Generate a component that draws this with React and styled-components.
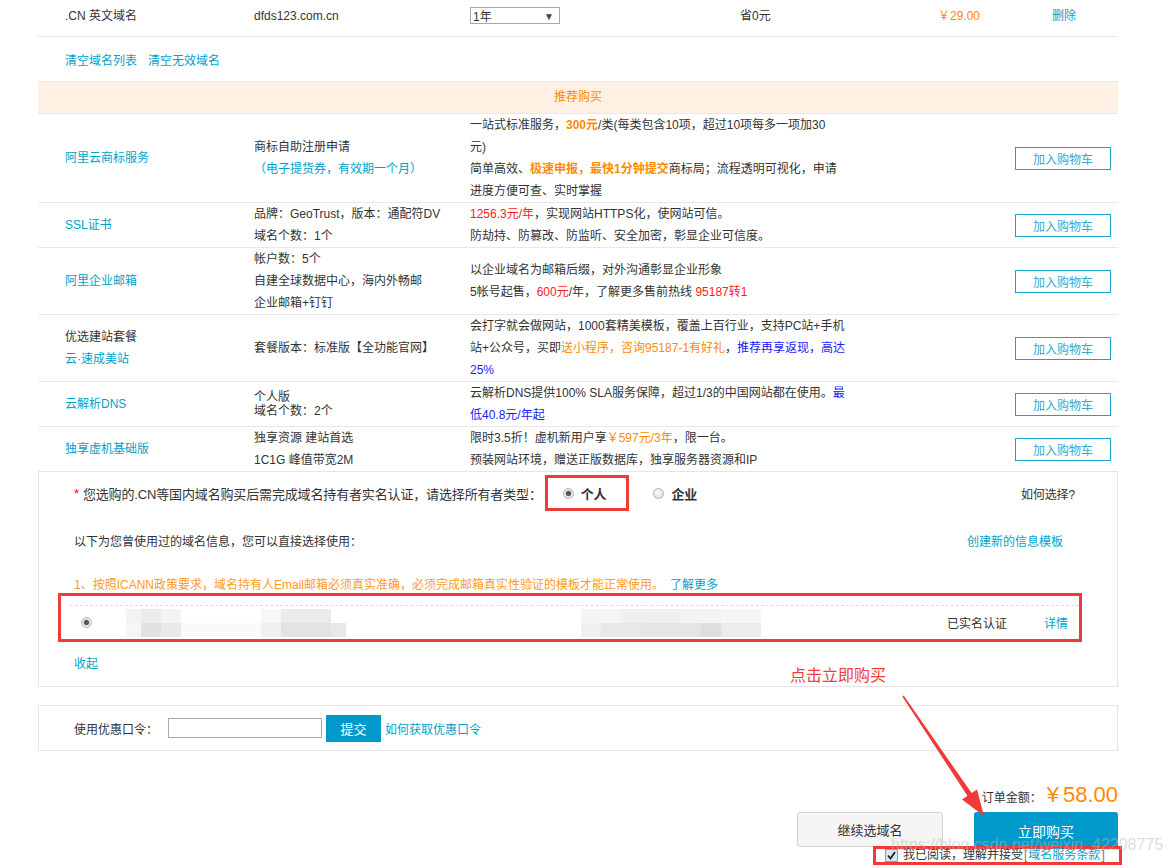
import React from 'react';
import styled, { createGlobalStyle, css } from 'styled-components';

const BLUE = '#00a2ca';
const ORANGE = '#ff8a00';
const MARK = '#ef3a3a';

const GlobalStyle = createGlobalStyle`
  body {
    margin: 0;
    background: #fff;
    font-family: "Liberation Sans", "Noto Sans CJK SC", sans-serif;
    font-size: 12px;
    color: #333;
  }
`;

const Page = styled.div`
  position: relative;
  width: 1080px;
  margin-left: 38px;
  min-height: 868px;
`;

// cart line at the top
const CartRow = styled.div`
  display: grid;
  grid-template-columns: 189px 216px 270px 198px 114px auto;
  height: 37px;
  box-sizing: border-box;
  padding: 5px 0 0 27px;
  line-height: 22px;
  border-bottom: 1px solid #e8e8e8;
`;

const Select = styled.div`
  display: flex;
  align-items: center;
  justify-content: space-between;
  box-sizing: border-box;
  width: 90px;
  height: 17px;
  margin-top: 2px;
  padding: 2px 5px 0 2px;
  border: 1px solid #a9a9a9;
  line-height: 14px;
  span { font-size: 10px; color: #444; }
`;

const Price = styled.div`
  color: ${ORANGE};
`;

const Link = styled.a`
  color: ${BLUE};
  text-decoration: none;
  cursor: pointer;
`;

const LinkBar = styled.div`
  display: flex;
  align-items: center;
  gap: 11px;
  height: 45px;
  box-sizing: border-box;
  padding-left: 27px;
  border-bottom: 1px solid #e8e8e8;
`;

const RecommendHead = styled.div`
  height: 32px;
  box-sizing: border-box;
  line-height: 31px;
  text-align: center;
  color: ${ORANGE};
  background: #fef1e3;
  border-bottom: 1px solid #e8e8e8;
`;

// recommended products
const ProductRow = styled.div`
  display: grid;
  grid-template-columns: 189px 216px 1fr 96px;
  align-items: center;
  padding: 0 7px 0 27px;
  border-bottom: ${p => (p.$last ? 'none' : '1px solid #e8e8e8')};
`;

const Cell = styled.div`
  white-space: nowrap;
  line-height: ${p => (p.$tight ? '14px' : '22px')};
`;

const Name = styled.div`
  color: ${p => (p.$plain ? '#333' : BLUE)};
`;

const Hi = styled.span`
  color: ${p => ({ orange: ORANGE, red: '#ff1a1a', blue: '#1a1aff', link: BLUE }[p.$tone])};
  font-weight: ${p => (p.$bold ? 'bold' : 'normal')};
`;

const CartButton = styled.button`
  width: 96px;
  height: 23px;
  box-sizing: border-box;
  padding: 0;
  border: 1px solid #19a3cf;
  background: #fff;
  color: #3aa6cc;
  font: inherit;
  cursor: pointer;
`;

// real-name owner box
const OwnerBox = styled.div`
  border: 1px solid #e5e5e5;
  padding: 0 0 12px 35px;
`;

const OwnerRow = styled.div`
  display: flex;
  align-items: center;
  height: 42px;
  font-size: 13px;
  letter-spacing: -0.15px;
`;

const Required = styled.span`
  color: #f00;
  margin-right: 4px;
`;

const Option = styled.label`
  display: inline-flex;
  align-items: center;
  gap: 7px;
  font-weight: bold;
  font-size: 13px;
  ${p =>
    p.$marked
      ? css`
          height: 36px;
          box-sizing: border-box;
          margin-left: 3px;
          padding: 0 20px 0 15px;
          border: 3px solid ${MARK};
        `
      : css`
          margin-left: 24px;
        `}
`;

const Radio = styled.span`
  display: inline-block;
  flex: none;
  width: 11px;
  height: 11px;
  box-sizing: border-box;
  border-radius: 50%;
  border: 1px solid #b3b3b3;
  background: ${p =>
    p.$checked
      ? 'radial-gradient(circle, #555 0 2px, #8a8a8a 2.6px, #e9e9e9 3.2px)'
      : 'radial-gradient(circle at 40% 35%, #fbfbfb, #d9d9d9)'};
`;

const HowTo = styled.span`
  margin-left: auto;
  margin-right: 42px;
  font-size: 12px;
`;

const InfoRow = styled.div`
  display: flex;
  align-items: center;
  justify-content: space-between;
  height: 52px;
  padding-right: 54px;
`;

const Notice = styled.div`
  margin-top: 9px;
  line-height: 20px;
  color: #ff9a1f;
  a { margin-left: 6px; }
`;

const RecordFrame = styled.div`
  width: 1024px;
  height: 49px;
  box-sizing: border-box;
  margin: -2px 0 0 -16px;
  padding-top: 9px;
  border: 3px solid ${MARK};
`;

const Record = styled.div`
  display: flex;
  align-items: center;
  height: 34px;
  box-sizing: border-box;
  margin-left: 9px;
  padding: 0 11px;
  border-top: 1px dashed #dcdcdc;
`;

const Mosaic = styled.svg`
  flex: none;
  margin-left: 34px;
`;

const Status = styled.span`
  margin-left: auto;
  margin-right: 37px;
`;

const Collapse = styled.div`
  margin-top: 12px;
  line-height: 20px;
`;

// coupon
const CouponBox = styled.div`
  display: flex;
  align-items: center;
  height: 46px;
  box-sizing: border-box;
  margin-top: 18px;
  padding-left: 35px;
  border: 1px solid #e5e5e5;
`;

const CouponInput = styled.input`
  width: 154px;
  height: 20px;
  box-sizing: border-box;
  margin: 0 0 0 10px;
  padding: 0 3px;
  border: 1px solid #a9a9a9;
`;

const SubmitButton = styled.button`
  width: 55px;
  height: 27px;
  margin: 0 4px;
  border: none;
  background: #0099cc;
  color: #fff;
  font: inherit;
  font-size: 13px;
`;

// order summary
const Summary = styled.div`
  display: flex;
  flex-direction: column;
  align-items: flex-end;
`;

const AmountRow = styled.div`
  display: flex;
  align-items: baseline;
  height: 24px;
  margin-top: 32px;
  line-height: 24px;
`;

const Amount = styled.span`
  margin-left: 5px;
  color: ${ORANGE};
  font-size: 22px;
  b { font-weight: normal; margin-right: 4px; }
`;

const ButtonRow = styled.div`
  display: flex;
  align-items: flex-start;
  gap: 31px;
  margin-top: 5px;
`;

const ActionButton = styled.button`
  box-sizing: border-box;
  padding: 0;
  font-family: inherit;
  cursor: pointer;
  ${p =>
    p.$primary
      ? css`
          width: 144px;
          height: 37px;
          border: none;
          border-radius: 3px 3px 0 0;
          background: #0099cc;
          color: #fff;
          font-size: 14px;
        `
      : css`
          width: 146px;
          height: 35px;
          border: 1px solid #d3d3d3;
          border-radius: 3px;
          background: #f5f5f5;
          color: #333;
          font-size: 13px;
        `}
`;

const AgreeBox = styled.div`
  display: flex;
  align-items: center;
  gap: 5px;
  width: 249px;
  height: 19px;
  box-sizing: border-box;
  margin: -3px -4px 0 0;
  padding-left: 9px;
  border: 3px solid ${MARK};
  line-height: 13px;
  white-space: nowrap;
  em { font-style: normal; color: #777; margin: 0 1px; }
`;

// annotations drawn over the screenshot
const Callout = styled.div`
  position: absolute;
  left: 752px;
  top: 666px;
  color: #f23b3b;
  font-size: 16px;
  line-height: 20px;
`;

const Arrow = styled.svg`
  position: absolute;
  left: 822px;
  top: 690px;
`;

const Watermark = styled.div`
  position: absolute;
  left: 853px;
  top: 838px;
  font-size: 16px;
  line-height: 14px;
  color: rgba(185, 185, 185, 0.5);
  white-space: nowrap;
  pointer-events: none;
`;

const products = [
  {
    name: [<Name key="a">阿里云商标服务</Name>],
    spec: [
      '商标自助注册申请',
      <Hi key="n" $tone="link">（电子提货券，有效期一个月）</Hi>,
    ],
    desc: [
      <>一站式标准服务，<Hi $tone="orange" $bold>300元</Hi>/类(每类包含10项，超过10项每多一项加30</>,
      '元)',
      <>简单高效、<Hi $tone="orange" $bold>极速申报，最快1分钟提交</Hi>商标局；流程透明可视化，申请</>,
      '进度方便可查、实时掌握',
    ],
  },
  {
    name: [<Name key="a">SSL证书</Name>],
    spec: ['品牌：GeoTrust，版本：通配符DV', '域名个数：1个'],
    desc: [
      <><Hi $tone="red">1256.3元/年</Hi>，实现网站HTTPS化，使网站可信。</>,
      '防劫持、防篡改、防监听、安全加密，彰显企业可信度。',
    ],
  },
  {
    name: [<Name key="a">阿里企业邮箱</Name>],
    spec: ['帐户数：5个', '自建全球数据中心，海内外畅邮', '企业邮箱+钉钉'],
    desc: [
      '以企业域名为邮箱后缀，对外沟通彰显企业形象',
      <>5帐号起售，<Hi $tone="red">600元</Hi>/年，了解更多售前热线 <Hi $tone="red">95187转1</Hi></>,
    ],
  },
  {
    name: [<Name key="a" $plain>优选建站套餐</Name>, <Name key="b">云·速成美站</Name>],
    spec: ['套餐版本：标准版【全功能官网】'],
    desc: [
      '会打字就会做网站，1000套精美模板，覆盖上百行业，支持PC站+手机',
      <>站+公众号，买即<Hi $tone="orange">送小程序，咨询95187-1有好礼</Hi>，<Hi $tone="blue">推荐再享返现，高达</Hi></>,
      <Hi $tone="blue">25%</Hi>,
    ],
  },
  {
    name: [<Name key="a">云解析DNS</Name>],
    spec: ['个人版', '域名个数：2个'],
    tight: true,
    desc: [
      <>云解析DNS提供100% SLA服务保障，超过1/3的中国网站都在使用。<Hi $tone="blue">最</Hi></>,
      <Hi $tone="blue">低40.8元/年起</Hi>,
    ],
  },
  {
    name: [<Name key="a">独享虚机基础版</Name>],
    spec: ['独享资源 建站首选', '1C1G 峰值带宽2M'],
    desc: [
      <>限时3.5折！虚机新用户享<Hi $tone="orange">￥597元/3年</Hi>，限一台。</>,
      '预装网站环境，赠送正版数据库，独享服务器资源和IP',
    ],
  },
];

// pixelated blur over the personal data, [x, y, w, h, grey]
const blur = [
  [0, 0, 15, 14, 244], [15, 0, 20, 14, 236], [35, 0, 20, 14, 243],
  [135, 0, 20, 14, 247], [155, 0, 50, 14, 235], [455, 0, 40, 14, 245],
  [495, 0, 60, 14, 239], [555, 0, 40, 14, 243], [595, 0, 40, 14, 246],
  [0, 14, 15, 14, 246], [15, 14, 20, 14, 226], [35, 14, 20, 14, 233],
  [55, 14, 80, 14, 250], [135, 14, 20, 14, 240], [155, 14, 50, 14, 227],
  [205, 14, 15, 14, 232], [455, 14, 20, 14, 240], [475, 14, 40, 14, 232],
  [515, 14, 60, 14, 229], [575, 14, 20, 14, 222], [595, 14, 40, 14, 236],
];

function Product({ item, last }) {
  return (
    <ProductRow $last={last}>
      <Cell>{item.name}</Cell>
      <Cell $tight={item.tight}>
        {item.spec.map((s, i) => <div key={i}>{s}</div>)}
      </Cell>
      <Cell>
        {item.desc.map((d, i) => <div key={i}>{d}</div>)}
      </Cell>
      <CartButton>加入购物车</CartButton>
    </ProductRow>
  );
}

export default function App() {
  return (
    <Page>
      <GlobalStyle />

      <CartRow>
        <div>.CN 英文域名</div>
        <div>dfds123.com.cn</div>
        <div>
          <Select>1年<span>▼</span></Select>
        </div>
        <div>省0元</div>
        <Price>￥29.00</Price>
        <Link>删除</Link>
      </CartRow>

      <LinkBar>
        <Link>清空域名列表</Link>
        <Link>清空无效域名</Link>
      </LinkBar>

      <RecommendHead>推荐购买</RecommendHead>

      {products.map((p, i) => (
        <Product key={i} item={p} last={i === products.length - 1} />
      ))}

      <OwnerBox>
        <OwnerRow>
          <Required>*</Required>
          您选购的.CN等国内域名购买后需完成域名持有者实名认证，请选择所有者类型：
          <Option $marked><Radio $checked />个人</Option>
          <Option><Radio />企业</Option>
          <HowTo>如何选择?</HowTo>
        </OwnerRow>

        <InfoRow>
          <span>以下为您曾使用过的域名信息，您可以直接选择使用：</span>
          <Link>创建新的信息模板</Link>
        </InfoRow>

        <Notice>
          1、按照ICANN政策要求，域名持有人Email邮箱必须真实准确，必须完成邮箱真实性验证的模板才能正常使用。
          <Link>了解更多</Link>
        </Notice>

        <RecordFrame>
          <Record>
            <Radio $checked />
            <Mosaic width="635" height="28" viewBox="0 0 635 28">
              {blur.map(([x, y, w, h, g], i) => (
                <rect key={i} x={x} y={y} width={w} height={h} fill={`rgb(${g},${g},${g})`} />
              ))}
            </Mosaic>
            <Status>已实名认证</Status>
            <Link>详情</Link>
          </Record>
        </RecordFrame>

        <Collapse><Link>收起</Link></Collapse>
      </OwnerBox>

      <CouponBox>
        使用优惠口令：
        <CouponInput type="text" />
        <SubmitButton>提交</SubmitButton>
        <Link>如何获取优惠口令</Link>
      </CouponBox>

      <Summary>
        <AmountRow>
          订单金额：
          <Amount><b>¥</b>58.00</Amount>
        </AmountRow>
        <ButtonRow>
          <ActionButton>继续选域名</ActionButton>
          <ActionButton $primary>立即购买</ActionButton>
        </ButtonRow>
        <AgreeBox>
          <svg width="13" height="13" viewBox="0 0 13 13">
            <rect x="0.5" y="0.5" width="12" height="12" fill="#dfe5ee" stroke="#8d9cb3" />
            <path d="M3 6.5 L5.5 9.5 L10 3" fill="none" stroke="#222" strokeWidth="1.8" />
          </svg>
          <span>我已阅读，理解并接受<em>[</em><Link>域名服务条款</Link><em>]</em></span>
        </AgreeBox>
      </Summary>

      <Callout>点击立即购买</Callout>
      <Arrow width="140" height="135" viewBox="0 0 140 135">
        <polygon
          points="43.7,5.6 111.6,103 117,99.4 124,126 102,109.4 107.4,105.8 42.3,6.4"
          fill="#f03a3a"
        />
      </Arrow>
      <Watermark>https://blog.csdn.net/weixin_42208775</Watermark>
    </Page>
  );
}
